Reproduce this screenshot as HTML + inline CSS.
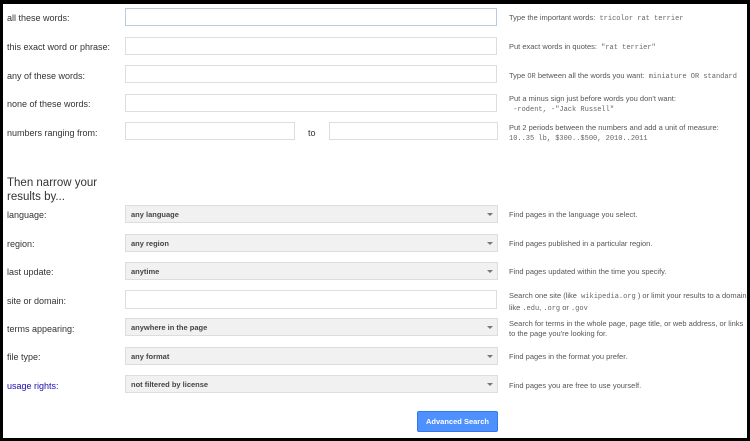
<!DOCTYPE html><html><head><style>
body{margin:0;width:750px;height:441px;background:#000;position:relative;overflow:hidden;font-family:"Liberation Sans",Arial,sans-serif}
#w{position:absolute;left:3px;top:4px;width:744px;height:434px;background:#fff}
.a{position:absolute}
.l{position:absolute;left:4px;font-size:9px;color:#333}
.i{position:absolute;left:122px;width:372px;height:18px;border:1px solid #ddd;background:#fff;box-sizing:border-box}
.s{position:absolute;left:122px;width:373px;height:18px;border:1px solid #ddd;background:#f1f1f1;box-sizing:border-box;font-size:7.5px;font-weight:bold;color:#444;padding:4px 0 0 5px}
.s:after{content:"";position:absolute right;position:absolute;right:4px;top:7px;border:3px solid transparent;border-top:3px solid #777}
.h{position:absolute;left:506px;font-size:7.5px;color:#555;line-height:9.5px;white-space:nowrap}
.m{font-family:"Liberation Mono",monospace;color:#666;font-size:7px}
</style></head><body><div id="w">
<div class="l" style="top:9px">all these words:</div><div class="i" style="top:4px;border-color:#b9cbe6"></div><div class="h" style="top:9px">Type the important words: &nbsp;<span class="m">tricolor rat terrier</span></div>
<div class="l" style="top:38px">this exact word or phrase:</div><div class="i" style="top:33px"></div><div class="h" style="top:38px">Put exact words in quotes: &nbsp;<span class="m">"rat terrier"</span></div>
<div class="l" style="top:67px">any of these words:</div><div class="i" style="top:61px"></div><div class="h" style="top:67px">Type <span class="m">OR</span> between all the words you want: &nbsp;<span class="m">miniature OR standard</span></div>
<div class="l" style="top:95px">none of these words:</div><div class="i" style="top:90px"></div><div class="h" style="top:90px">Put a minus sign just before words you don't want:<br><span class="m">&nbsp;-rodent, -"Jack Russell"</span></div>
<div class="l" style="top:124px">numbers ranging from:</div><div class="i" style="top:118px;width:170px"></div><div class="l" style="top:124px;left:305px">to</div><div class="i" style="top:118px;left:326px;width:169px"></div><div class="h" style="top:119px">Put 2 periods between the numbers and add a unit of measure:<br><span class="m">10..35 lb, $300..$500, 2010..2011</span></div>
<div class="l" style="top:172px;font-size:11.5px;line-height:14px">Then narrow your<br>results by...</div>
<div class="l" style="top:206px">language:</div><div class="s" style="top:201px">any language</div><div class="h" style="top:206px">Find pages in the language you select.</div>
<div class="l" style="top:235px">region:</div><div class="s" style="top:230px">any region</div><div class="h" style="top:235px">Find pages published in a particular region.</div>
<div class="l" style="top:263px">last update:</div><div class="s" style="top:258px">anytime</div><div class="h" style="top:263px">Find pages updated within the time you specify.</div>
<div class="l" style="top:292px">site or domain:</div><div class="i" style="top:286px;height:19px"></div><div class="h" style="top:287px">Search one site (like &nbsp;<span class="m">wikipedia.org</span> ) or limit your results to a domain<br>like <span class="m">.edu</span>, <span class="m">.org</span> or <span class="m">.gov</span></div>
<div class="l" style="top:320px">terms appearing:</div><div class="s" style="top:314px">anywhere in the page</div><div class="h" style="top:315px">Search for terms in the whole page, page title, or web address, or links<br>to the page you're looking for.</div>
<div class="l" style="top:348px">file type:</div><div class="s" style="top:343px">any format</div><div class="h" style="top:348px">Find pages in the format you prefer.</div>
<div class="l" style="top:377px;color:#1a0dab">usage rights:</div><div class="s" style="top:371px">not filtered by license</div><div class="h" style="top:377px">Find pages you are free to use yourself.</div>
<div class="a" style="left:414px;top:407px;width:81px;height:21px;background:#4d90fe;border:1px solid #3079ed;box-sizing:border-box;color:#fff;font-size:7.5px;font-weight:bold;text-align:center;line-height:19px;border-radius:2px">Advanced Search</div>
</div></body></html>
